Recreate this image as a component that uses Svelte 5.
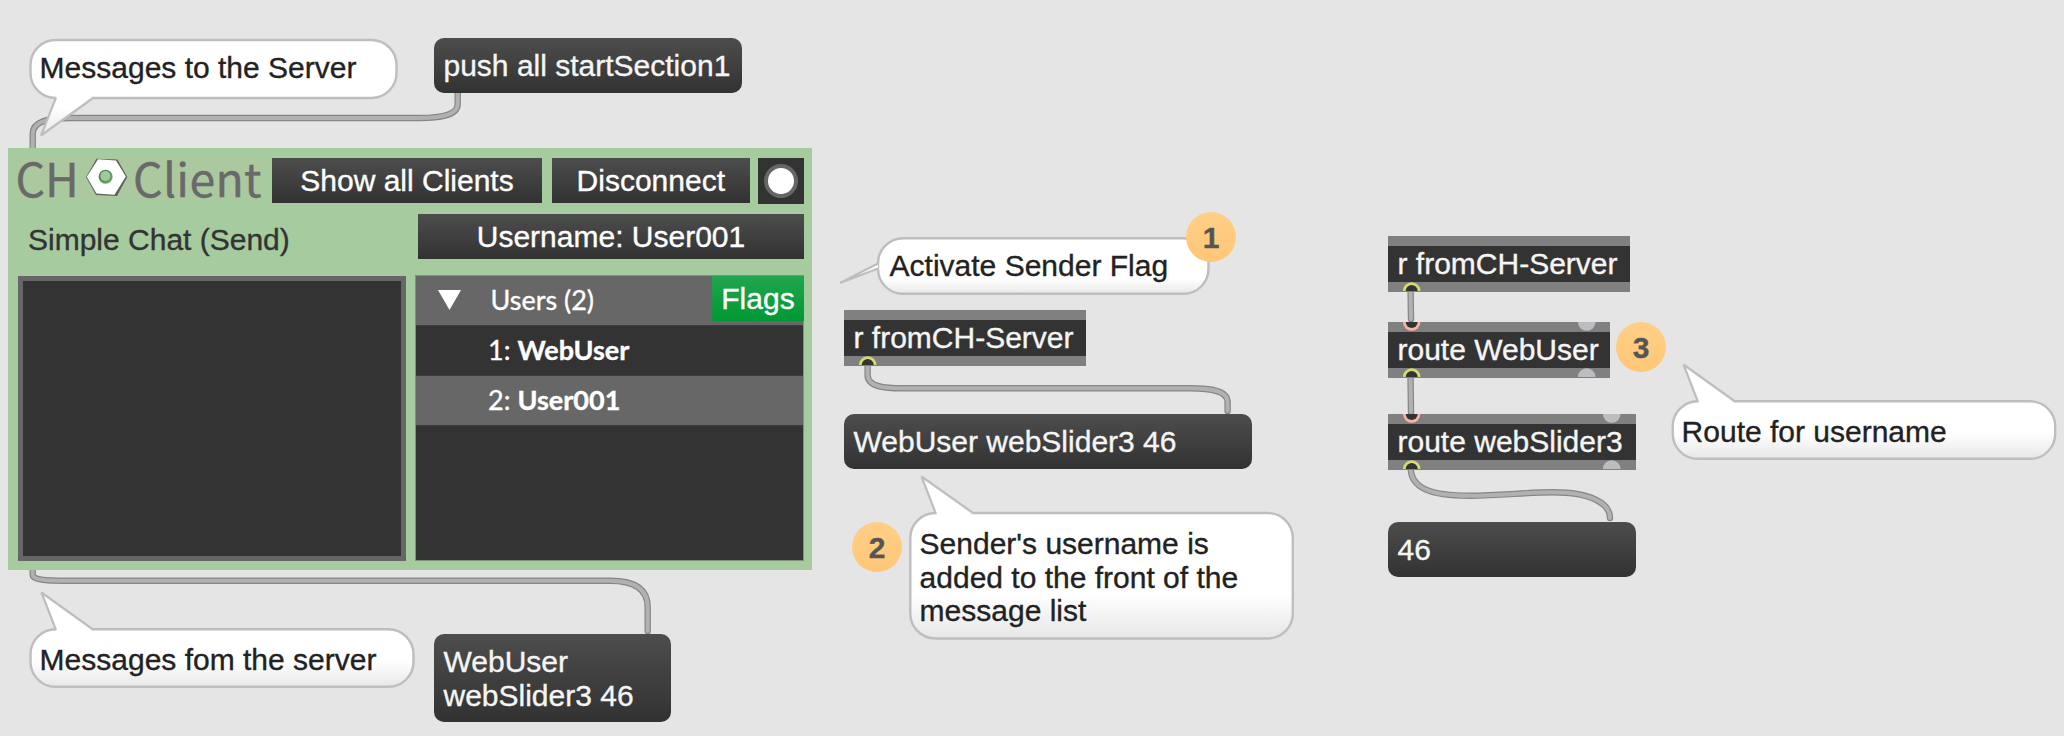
<script>
  const cables = [
    'M457.7 90V104C457.7 116 438 118 420 118H72C46 118 32.7 122 32.7 134V150',
    'M32.7 568V575C32.7 579.500 45 580.7 65 580.7H610C636 580.7 647.7 590 647.7 607V631',
    'M867.6 364V375C867.6 387 885 388.3 903 388.3H1190C1212 388.3 1227.600 391 1227.600 402V411',
    'M1410.600 290L1411 319',
    'M1410.5 376L1411 412',
    'M1410.700 468C1411 488 1430 495.700 1470 495.700C1500 495.700 1527 492.300 1553 492.300C1592 492.300 1610 504 1610 518'
  ];

  const bubbles = [
    { x: 30.500, y: 40, w: 366, h: 58, text: 'Messages to the Server', tx: 39.600, ty: 51, top: 39, bottom: 136, tail: 'M56 97.500L41 135.500L93 98', base: 'L90 96L57 96Z' },
    { x: 878, y: 238.300, w: 330.500, h: 55.500, text: 'Activate Sender Flag', tx: 889.600, ty: 249, top: 237, bottom: 295, tail: 'M878 263.5L840 283L878 268.500', base: 'Z' },
    { x: 910.300, y: 513, w: 382.500, h: 125.500, text: "Sender's username is\nadded to the front of the\nmessage list", tx: 919.600, ty: 527, top: 476, bottom: 640, tail: 'M936 514L921.500 476.500L973 513', base: 'L970 515L937 515Z' },
    { x: 1672.700, y: 401.300, w: 382.500, h: 57.500, text: 'Route for username', tx: 1681.600, ty: 415, top: 364, bottom: 460, tail: 'M1698 402L1683.500 364.500L1735 401.500', base: 'L1732 403.500L1699 403.500Z' },
    { x: 30.500, y: 629.3, w: 383, h: 57.500, text: 'Messages fom the server', tx: 39.600, ty: 643, top: 592, bottom: 688, tail: 'M56 630L41.500 592.500L93 629.500', base: 'L90 631.500L57 631.500Z' }
  ];

  const messages = [
    { x: 434, y: 38, w: 307.600, h: 55, text: 'push all startSection1' },
    { x: 844, y: 414, w: 407.600, h: 55, text: 'WebUser webSlider3 46' },
    { x: 434, y: 634, w: 237.300, h: 87.600, text: 'WebUser\nwebSlider3 46' },
    { x: 1388, y: 522, w: 247.600, h: 55, text: '46' }
  ];

  const objects = [
    { x: 844, y: 310, w: 242, text: 'r fromCH-Server' },
    { x: 1388, y: 236, w: 242, text: 'r fromCH-Server' },
    { x: 1388, y: 322, w: 222, text: 'route WebUser', inlet: true, second: 198.7 },
    { x: 1388, y: 414, w: 248, text: 'route webSlider3', inlet: true, second: 223.7 }
  ];

  const steps = [
    { n: 1, x: 1211, y: 237 },
    { n: 2, x: 877, y: 547 },
    { n: 3, x: 1641, y: 347 }
  ];

  const users = ['WebUser', 'User001'];
</script>

<main class="patcher">
  <svg class="layer" width="2064" height="736">
    {#each cables as d}
      <path {d} class="cable-edge" />
      <path {d} class="cable-core" />
    {/each}
  </svg>

  <section class="client">
    <header class="toolbar">
      <div class="logo">
        <span class="ch">CH</span>
        <svg width="43" height="40" viewBox="0 0 43 40">
          <defs>
            <linearGradient id="hole" x1="0" y1="0" x2="1" y2="1">
              <stop offset="0" stop-color="#3d7a45" />
              <stop offset="1" stop-color="#6bb070" />
            </linearGradient>
          </defs>
          <path d="M11.500 .8L32.500 1.500L42.300 19L32 38L11 37L1 19Z" fill="#5f6360" />
          <path d="M13 1.200L31 2.500L40.800 18.500L29.500 36.800L11.500 35.500L1.800 18.800Z" fill="#fff" />
          <circle cx="20.600" cy="18.700" r="7" fill="url(#hole)" />
          <circle cx="20.300" cy="18" r="5" fill="#a5c79c" />
        </svg>
        <span class="name">Client</span>
      </div>
      <button class="btn show">Show all Clients</button>
      <button class="btn disconnect">Disconnect</button>
      <button class="toggle" aria-label="Connection"><i></i></button>
    </header>

    <div class="subbar">
      <span class="title">Simple Chat (Send)</span>
      <button class="btn username">Username: User001</button>
    </div>

    <div class="body">
      <div class="chat"></div>
      <div class="list">
        <div class="row head">
          <svg width="23" height="20" viewBox="0 0 23 20"><path d="M0 0H23L11.500 20Z" fill="#fff" /></svg>
          <span class="count">Users (2)</span>
          <button class="flags">Flags</button>
        </div>
        {#each users as user, i}
          <div class="row" class:alt={i % 2 === 1}>
            <span class="num">{i + 1}:</span><b>{user}</b>
          </div>
        {/each}
      </div>
    </div>
  </section>

  <svg class="layer" width="2064" height="736">
    <defs>
      {#each bubbles as b, i}
        <linearGradient id="g{i}" gradientUnits="userSpaceOnUse" x1="0" x2="0" y1={b.top} y2={b.bottom}>
          <stop offset="0" stop-color="#fff" />
          <stop offset=".72" stop-color="#fff" />
          <stop offset="1" stop-color="#e6e6e6" />
        </linearGradient>
      {/each}
    </defs>
    {#each bubbles as b, i}
      <rect x={b.x} y={b.y} width={b.w} height={b.h} rx="25" fill="url(#g{i})" stroke="#bebebe" stroke-width="2.400" />
      <path d={b.tail + b.base} fill="url(#g{i})" />
      <path d={b.tail} fill="none" stroke="#bebebe" stroke-width="2.200" stroke-linejoin="bevel" />
    {/each}
  </svg>
  {#each bubbles as b}
    <p class="note" style="left:{b.tx}px;top:{b.ty}px">{b.text}</p>
  {/each}

  {#each messages as m}
    <div class="message" style="left:{m.x}px;top:{m.y}px;width:{m.w}px;height:{m.h}px">{m.text}</div>
  {/each}

  {#each objects as o}
    <div class="object" style="left:{o.x}px;top:{o.y}px;width:{o.w}px">
      <span>{o.text}</span>
      <svg class="ports" width={o.w} height="56">
        {#if o.inlet}
          <path d="M15 0A8.700 8.700 0 0 0 32.400 0Z" fill="#f9b3a5" />
          <path d="M17.700 0A6 6 0 0 0 29.700 0Z" fill="#333" />
        {/if}
        <path d="M15 55A8.700 8.700 0 0 1 32.400 55Z" fill="#d6da75" />
        <path d="M17.700 55A6 6 0 0 1 29.700 55Z" fill="#333" />
        {#if o.second}
          <path d="M{o.second - 8.800} 0a8.800 8.800 0 0 0 17.600 0Z" fill="#bcbdc0" />
          <path d="M{o.second - 8.800} 55a8.800 8.800 0 0 1 17.600 0Z" fill="#bcbdc0" />
        {/if}
      </svg>
    </div>
  {/each}

  {#each steps as s}
    <div class="step" style="left:{s.x - 25}px;top:{s.y - 25}px">{s.n}</div>
  {/each}
</main>

<style>
  :global(body) {
    margin: 0;
    background: #e5e5e5;
  }
  .patcher {
    position: relative;
    width: 2064px;
    height: 736px;
    overflow: hidden;
    background: #e5e5e5;
    font: 30px/33.6px 'Liberation Sans', Arial, sans-serif;
    color: #222;
    -webkit-text-stroke: 0.35px currentColor;
  }
  .layer {
    position: absolute;
    left: 0;
    top: 0;
  }
  .cable-edge,
  .cable-core {
    fill: none;
    stroke-linecap: round;
  }
  .cable-edge {
    stroke: #868686;
    stroke-width: 6.4px;
  }
  .cable-core {
    stroke: #b1b1b1;
    stroke-width: 4px;
  }
  button {
    border: 0;
    margin: 0;
    padding: 0;
    font: inherit;
    color: #fff;
  }
  .client {
    position: absolute;
    left: 8px;
    top: 148px;
    width: 804px;
    height: 422px;
    box-sizing: border-box;
    padding: 10px 8px 9px 10px;
    background: #a5cb9f;
    display: flex;
    flex-direction: column;
  }
  .toolbar {
    display: flex;
    height: 46px;
    margin-bottom: 10px;
  }
  .logo {
    display: flex;
    width: 244px;
    height: 41px;
    margin-right: 10px;
    background: #abc89f;
    color: #696969;
    font: 46.4px/37px 'Noto Sans CJK SC', sans-serif;
  }
  .ch {
    width: 67px;
    margin-left: -2.5px;
    margin-right: 2px;
  }
  .name {
    margin-left: 5.5px;
    letter-spacing: 0.3px;
  }
  .btn {
    height: 45px;
    line-height: 45px;
    background: linear-gradient(#4d4d4d, #323232);
  }
  .show {
    width: 270px;
    margin-right: 10px;
  }
  .disconnect {
    width: 197.6px;
    margin-right: 8.4px;
  }
  .toggle {
    width: 46px;
    height: 46px;
    background: #333;
    display: grid;
    place-items: center;
  }
  .toggle i {
    width: 26px;
    height: 26px;
    border: 4px solid #666;
    border-radius: 50%;
    background: #fff;
  }
  .subbar {
    display: flex;
    height: 45px;
    margin-bottom: 17px;
  }
  .title {
    width: 390px;
    padding-left: 10px;
    line-height: 51px;
    color: #333;
  }
  .username {
    width: 386px;
  }
  .body {
    display: flex;
    flex: 1;
    gap: 10.4px;
  }
  .chat {
    width: 377.6px;
    border: 5px solid #666;
    background: #333;
  }
  .list {
    width: 387px;
    height: 284px;
    background: #333;
    box-shadow: 0 0 0 1px #7d9479;
    font: 27px/48px Lato, sans-serif;
    color: #fff;
  }
  .row {
    display: flex;
    height: 50px;
    box-sizing: border-box;
    padding-left: 72px;
    border-bottom: 1px solid #3d3d3d;
  }
  .alt,
  .head {
    background: #676767;
  }
  .head {
    padding-left: 22px;
  }
  .head svg {
    margin-top: 14px;
  }
  .count {
    margin-left: 29.5px;
  }
  .flags {
    margin-left: auto;
    margin-right: -1px;
    width: 92px;
    height: 45px;
    background: linear-gradient(#22a650, #009832);
    font: 30px/45px 'Liberation Sans', Arial, sans-serif;
  }
  .num {
    width: 29.5px;
  }
  .note {
    position: absolute;
    margin: 0;
    white-space: pre;
  }
  .message {
    position: absolute;
    box-sizing: border-box;
    padding: 11px 9.5px 0;
    white-space: pre;
    border-radius: 10px;
    background: linear-gradient(#4d4d4d, #323232);
    color: #f5f5f5;
  }
  .object {
    position: absolute;
    height: 56px;
    box-sizing: border-box;
    border: solid #808080;
    border-width: 10px 0;
    padding-left: 9.5px;
    background: #333;
    color: #f5f5f5;
    white-space: pre;
    line-height: 35px;
  }
  .ports {
    position: absolute;
    left: 0;
    top: -10px;
  }
  .step {
    position: absolute;
    width: 50px;
    height: 50px;
    border-radius: 50%;
    background: linear-gradient(#ffcf87, #ffc777);
    color: #555;
    font-weight: bold;
    line-height: 51px;
    text-align: center;
  }
</style>
